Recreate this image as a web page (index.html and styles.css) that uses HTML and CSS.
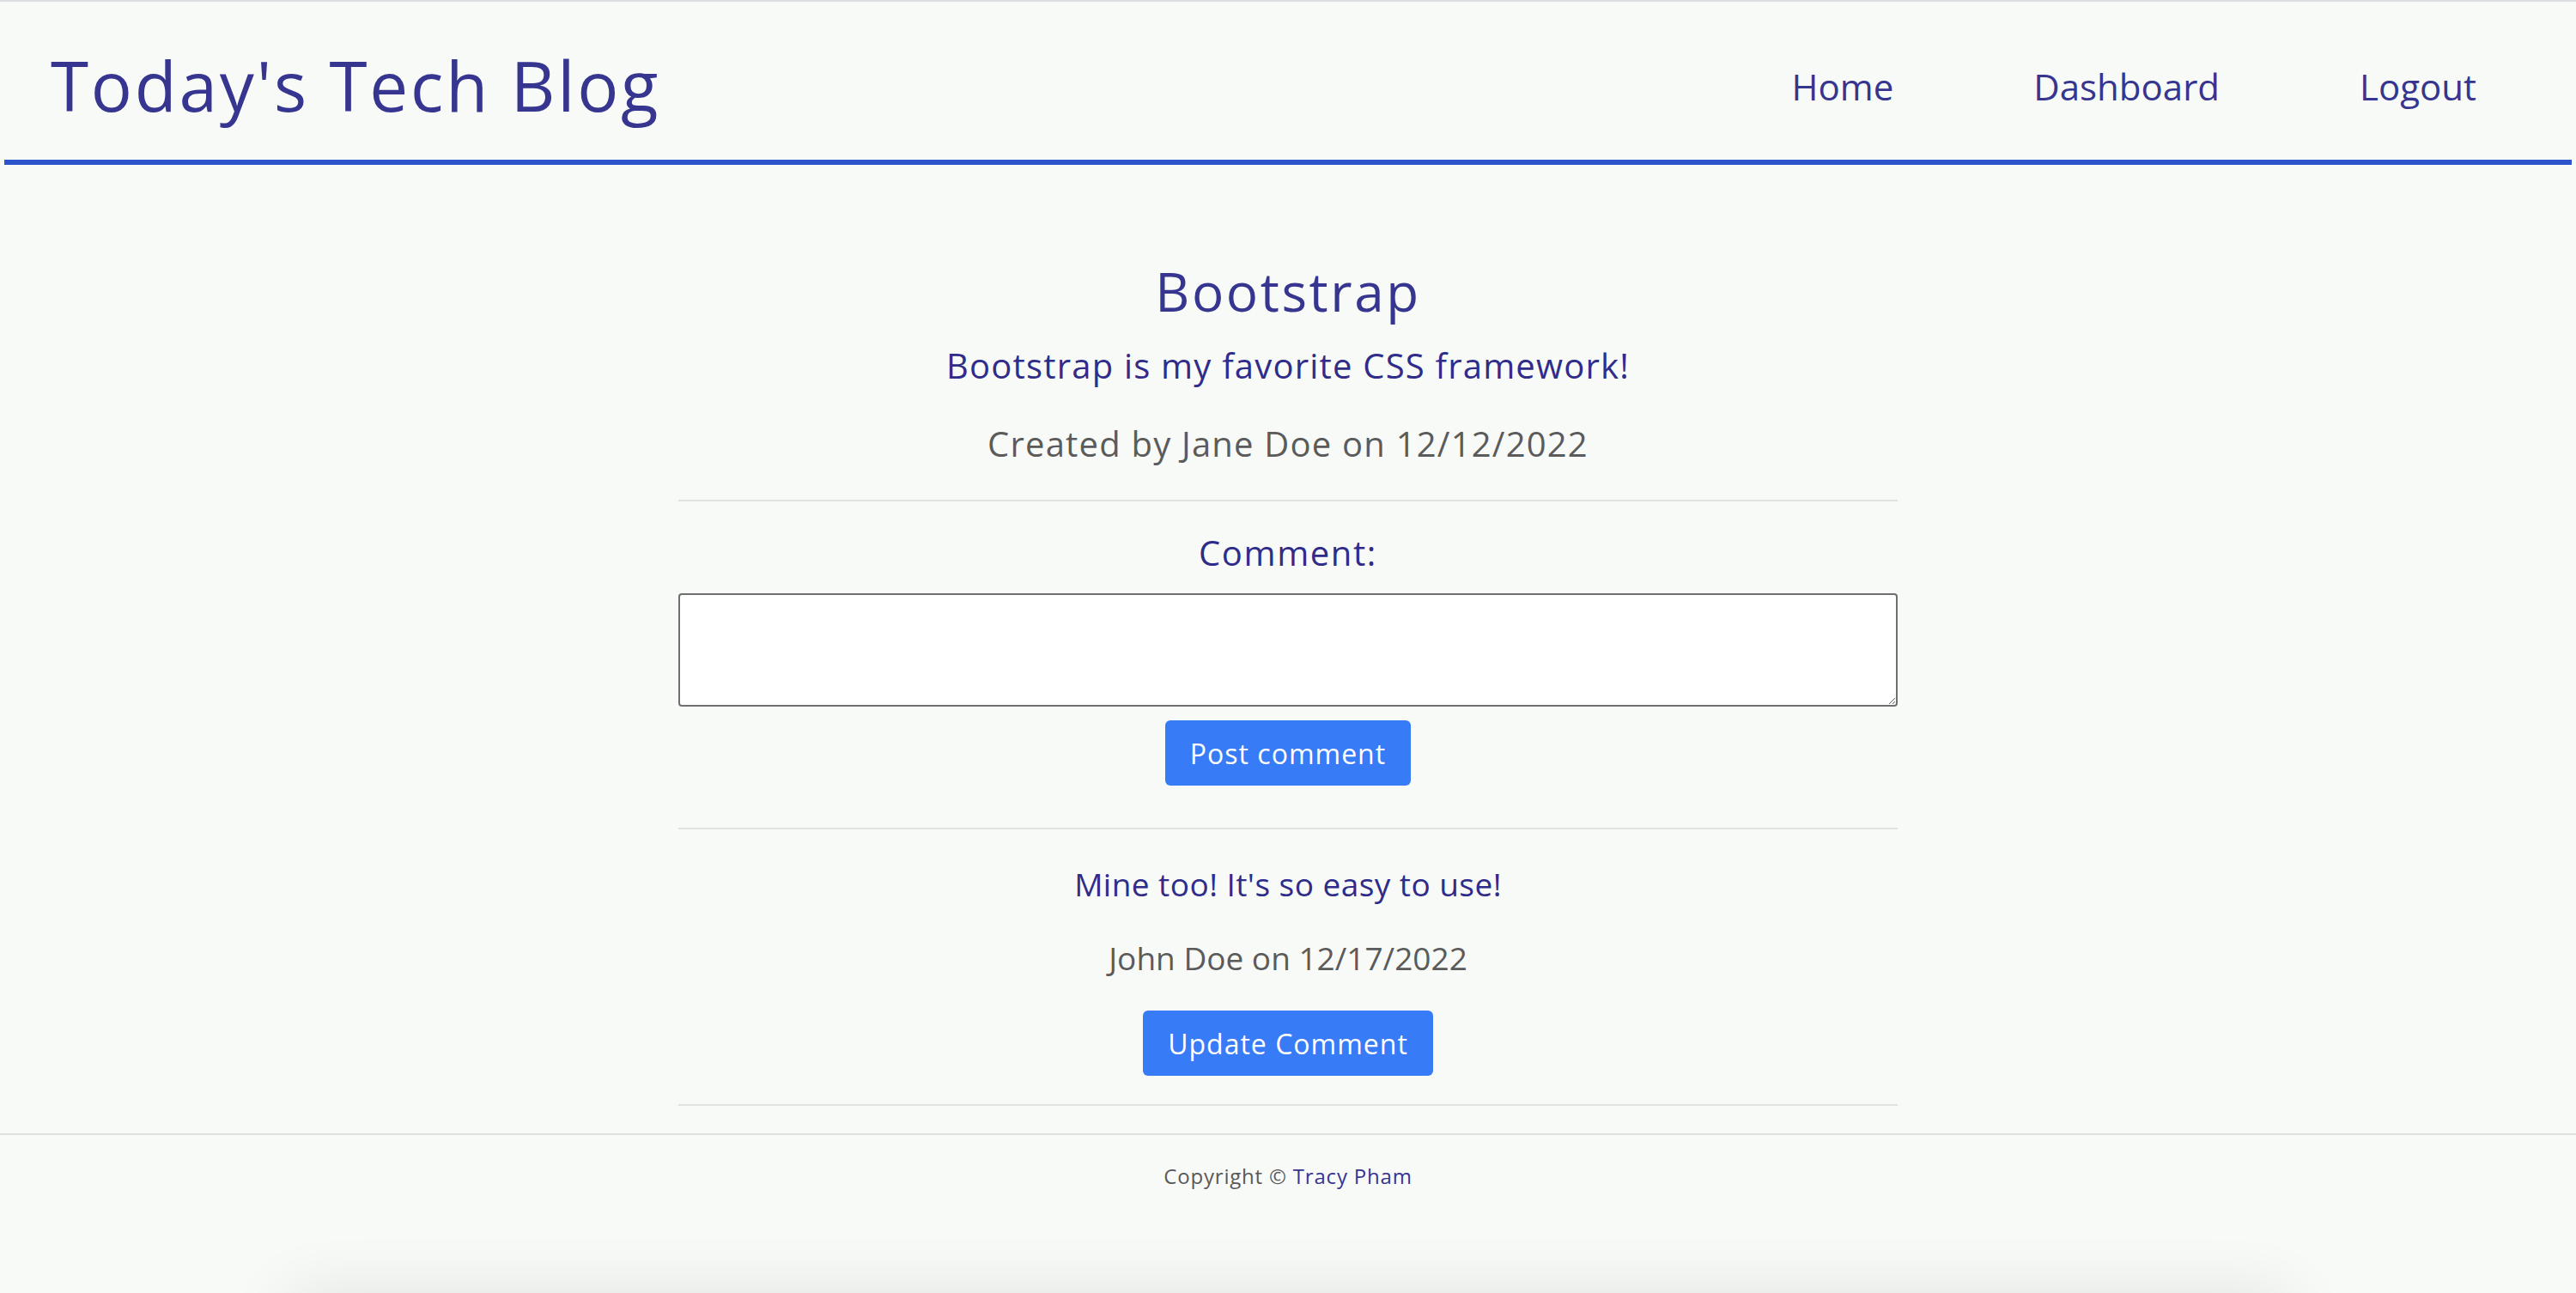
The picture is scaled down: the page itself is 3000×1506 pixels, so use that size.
FILE: index.html
```html
<!DOCTYPE html>
<html lang="en">
<head>
<meta charset="utf-8">
<title>Today's Tech Blog</title>
<link rel="stylesheet" href="styles.css">
</head>
<body>
<header class="site-header">
  <h1 class="brand">Today's Tech Blog</h1>
  <nav class="nav">
    <a class="nav-link" href="#">Home</a>
    <a class="nav-link" href="#">Dashboard</a>
    <a class="nav-link" href="#">Logout</a>
  </nav>
</header>
<main class="post">
  <h2 class="post-title">Bootstrap</h2>
  <p class="post-body">Bootstrap is my favorite CSS framework!</p>
  <p class="post-meta">Created by Jane Doe on 12/12/2022</p>
  <hr class="rule rule-first">
  <form class="comment-form">
    <label class="comment-label" for="comment">Comment:</label>
    <textarea class="comment-input" id="comment"></textarea>
    <button class="btn btn-post" type="button">Post comment</button>
  </form>
  <hr class="rule rule-second">
  <div class="comment">
    <p class="comment-text">Mine too! It's so easy to use!</p>
    <p class="comment-meta">John Doe on 12/17/2022</p>
    <button class="btn btn-update" type="button">Update Comment</button>
  </div>
  <hr class="rule rule-third">
</main>
<footer class="site-footer">
  <p class="copyright">Copyright © <a class="footer-link" href="#">Tracy Pham</a></p>
</footer>
<div class="below-card"></div>
</body>
</html>
```
FILE: styles.css
```css
html, body {
  margin: 0;
  padding: 0;
}
html {
  overflow: hidden;
}
body {
  background: #f8faf8;
  border-top: 2px solid #dcdedf;
  font-family: "Open Sans", "Noto Sans", sans-serif;
  color: #36358f;
  height: 1504px;
  overflow: hidden;
}
.site-header {
  margin: 0 5px;
  padding-top: 10px;
  box-sizing: border-box;
  height: 190px;
  border-bottom: 6px solid #2b54cd;
  display: flex;
  align-items: center;
  justify-content: space-between;
}
.brand {
  margin: 0;
  padding-left: 54px;
  font-size: 80px;
  line-height: 80px;
  font-weight: 400;
  letter-spacing: 2.8px;
  color: #36358f;
}
.nav {
  display: flex;
  gap: 163px;
  padding-right: 111px;
  padding-top: 3px;
}
.nav-link {
  font-size: 42px;
  line-height: 42px;
  color: #36358f;
  text-decoration: none;
}
.post {
  width: 1420px;
  margin: 0 auto;
  padding-top: 110px;
  text-align: center;
}
.post-title {
  margin: 0;
  font-size: 62px;
  line-height: 74px;
  font-weight: 400;
  letter-spacing: 2.6px;
  color: #36358f;
}
.post-body {
  margin: 20px 0 0;
  font-size: 40px;
  line-height: 60px;
  letter-spacing: 1.2px;
  color: #2f2c8a;
}
.post-meta {
  margin: 31px 0 0;
  font-size: 40px;
  line-height: 60px;
  letter-spacing: 1.2px;
  color: #5b5b5b;
}
.rule {
  border: 0;
  border-top: 2px solid #e1e2e0;
  margin: 0;
  height: 0;
}
.rule-first { margin-top: 35px; }
.rule-second { margin-top: 49px; }
.rule-third { margin-top: 33px; }
.comment-form {
  display: flex;
  flex-direction: column;
  align-items: center;
  padding-top: 30px;
}
.comment-label {
  font-size: 40px;
  line-height: 60px;
  letter-spacing: 1.6px;
  color: #2f2c8a;
}
.comment-input {
  display: block;
  margin-top: 17px;
  width: 100%;
  height: 132px;
  box-sizing: border-box;
  border: 2px solid #6f6f6f;
  border-radius: 4px;
  background: #ffffff;
  font-family: inherit;
}
.btn {
  display: block;
  height: 76px;
  padding: 0 29px;
  border: 0;
  border-radius: 6px;
  background: #377bf6;
  color: #ffffff;
  font-family: "Open Sans", "Noto Sans", sans-serif;
  font-size: 32px;
  letter-spacing: 1px;
}
.btn-post {
  margin-top: 16px;
}
.comment {
  display: flex;
  flex-direction: column;
  align-items: center;
  padding-top: 36px;
}
.comment-text {
  margin: 0;
  font-size: 37px;
  line-height: 56px;
  letter-spacing: 0.45px;
  color: #2f2c8a;
}
.comment-meta {
  margin: 30px 0 0;
  font-size: 37px;
  line-height: 56px;
  letter-spacing: 0;
  color: #5b5b5b;
}
.btn-update {
  margin-top: 33px;
}
.site-footer {
  margin-top: 32px;
  border-top: 2px solid #dfe1df;
  padding-top: 30px;
  text-align: center;
}
.copyright {
  margin: 0;
  font-size: 24px;
  line-height: 36px;
  letter-spacing: 0.8px;
  color: #595959;
}
.footer-link {
  color: #36358f;
  text-decoration: none;
}
.below-card {
  width: 2320px;
  height: 40px;
  margin: 130px auto 0;
  background: #f8faf8;
  box-shadow: 0 0 80px rgba(0, 0, 0, 0.16);
}
```
